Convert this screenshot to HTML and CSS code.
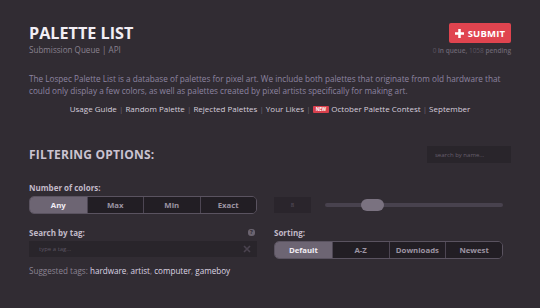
FILE: index.html
```html
<!DOCTYPE html>
<html lang="en">
<head>
  <meta charset="UTF-8">
  <title>Palette List</title>
  <link rel="stylesheet" href="styles.css">
</head>
<body>
  <div class="page">
    <!-- header -->
    <div class="header">
      <div class="title-block">
        <h1 class="title">PALETTE LIST</h1>
        <div class="subnav"><a>Submission Queue</a> | <a>API</a></div>
      </div>
      <div class="submit-block">
        <button class="submit-btn">
          <svg width="9" height="9" viewBox="0 0 10 10"><path d="M3.6 0h2.8v3.6H10v2.8H6.4V10H3.6V6.4H0V3.6h3.6z" fill="#fff"/></svg>
          SUBMIT
        </button>
        <div class="queue"><b>0</b> in queue, <b>1058</b> pending</div>
      </div>
    </div>

    <p class="desc">The Lospec Palette List is a database of palettes for pixel art. We include both palettes that originate from old hardware that could only display a few colors, as well as palettes created by pixel artists specifically for making art.</p>

    <div class="links">
      <a>Usage Guide</a> <span class="sep">|</span>
      <a>Random Palette</a> <span class="sep">|</span>
      <a>Rejected Palettes</a> <span class="sep">|</span>
      <a>Your Likes</a> <span class="sep">|</span>
      <span class="new">NEW</span> <a>October Palette Contest</a> <span class="sep">|</span>
      <a>September</a>
    </div>

    <!-- filters -->
    <div class="filter-head">
      <h2>FILTERING OPTIONS:</h2>
      <input class="name-search" type="text" placeholder="search by name...">
    </div>

    <div class="filters">
      <div class="field">
        <div class="label">Number of colors:</div>
        <div class="seg">
          <span class="active">Any</span>
          <span>Max</span>
          <span>Min</span>
          <span>Exact</span>
        </div>
      </div>
      <div class="field range-field">
        <div class="count-box">8</div>
        <div class="slider"><div class="thumb"></div></div>
      </div>

      <div class="field">
        <div class="label">Search by tag: <span class="help">?</span></div>
        <div class="tag-input">
          <span>type a tag...</span>
          <svg width="8" height="8" viewBox="0 0 8 8"><path d="M1 1l6 6M7 1L1 7" stroke="#4a434f" stroke-width="1.6"/></svg>
        </div>
        <div class="suggested">Suggested tags: <a>hardware</a>, <a>artist</a>, <a>computer</a>, <a>gameboy</a></div>
      </div>
      <div class="field">
        <div class="label">Sorting:</div>
        <div class="seg">
          <span class="active">Default</span>
          <span>A-Z</span>
          <span>Downloads</span>
          <span>Newest</span>
        </div>
      </div>
    </div>
  </div>
</body>
</html>
```

FILE: styles.css
```css
html, body {
  margin: 0;
  height: 100%;
}
body {
  background: #312c33;
  font-family: 'Open Sans', 'DejaVu Sans', sans-serif;
  color: #d8d0de;
  overflow: hidden;
}
.page {
  width: 482px;
  margin: 0 auto;
  padding-top: 23px;
}
.header {
  display: flex;
  justify-content: space-between;
  align-items: flex-start;
}
.title {
  margin: 0;
  font-size: 16.2px;
  line-height: 20px;
  font-weight: 700;
  color: #f2eef4;
}
.subnav {
  font-size: 8.1px;
  line-height: 12px;
  color: #8a8290;
  margin-top: 1px;
}
.submit-block {
  display: flex;
  flex-direction: column;
  align-items: flex-end;
}
.submit-btn {
  display: flex;
  align-items: center;
  justify-content: center;
  gap: 4px;
  width: 62px;
  height: 20px;
  padding: 0;
  background: #e0444f;
  border: none;
  border-radius: 2px;
  color: #fff;
  font-family: inherit;
  font-size: 9.5px;
  font-weight: 700;
  letter-spacing: 0.2px;
}
.queue {
  margin-top: 3px;
  font-size: 6.5px;
  color: #6c6572;
  font-weight: 600;
}
.queue b {
  font-weight: 400;
  color: #5b5461;
}
.desc {
  margin: 17px 0 0;
  font-size: 8.2px;
  line-height: 12px;
  color: #8d84a0;
  padding-right: 10px;
}
.links {
  margin-top: 6px;
  text-align: center;
  font-size: 8px;
  line-height: 12px;
  color: #d6cedd;
}
.links .sep {
  color: #6b6371;
}
.new {
  display: inline-block;
  background: #d8404d;
  color: #fff;
  font-size: 4.5px;
  font-weight: 700;
  line-height: 7px;
  padding: 0 3px;
  border-radius: 1px;
  vertical-align: 1px;
}
.filter-head {
  margin-top: 31px;
  display: flex;
  justify-content: space-between;
  align-items: center;
}
.filter-head h2 {
  margin: 0;
  font-size: 12px;
  font-weight: 700;
  color: #cbc3d1;
  letter-spacing: 0.2px;
}
.name-search {
  width: 84px;
  height: 17px;
  box-sizing: border-box;
  border: none;
  background: #29252b;
  color: #aaa;
  font-family: inherit;
  font-size: 6px;
  padding: 0 8px;
  outline: none;
}
.name-search::placeholder {
  color: #675f6d;
}
.filters {
  display: grid;
  grid-template-columns: 228px 229px;
  column-gap: 17px;
  row-gap: 13px;
  margin-top: 19px;
}
.label {
  display: flex;
  justify-content: space-between;
  align-items: center;
  font-size: 8px;
  font-weight: 700;
  color: #c2bac8;
  line-height: 11px;
  margin-bottom: 3px;
}
.help {
  width: 7px;
  height: 7px;
  border-radius: 3px;
  background: #6b6470;
  color: #312c33;
  font-size: 6px;
  line-height: 7px;
  text-align: center;
  margin-right: 2px;
}
.seg {
  display: grid;
  grid-template-columns: repeat(4, 1fr);
  height: 18px;
  box-sizing: border-box;
  border: 1px solid #5a5360;
  border-radius: 5px;
  overflow: hidden;
}
.seg span {
  display: flex;
  align-items: center;
  justify-content: center;
  background: #221e24;
  color: #9c94a2;
  font-size: 7.8px;
  font-weight: 700;
  border-left: 1px solid #4d4653;
}
.seg span:first-child {
  border-left: none;
}
.seg span.active {
  background: #6d6573;
  color: #f1edf3;
}
.range-field {
  display: flex;
  align-items: center;
  padding-top: 14px;
}
.count-box {
  width: 37px;
  height: 16px;
  background: #2a252c;
  color: #5e5764;
  font-size: 6px;
  line-height: 16px;
  text-align: center;
}
.slider {
  position: relative;
  margin-left: 14px;
  width: 178px;
  height: 4px;
  border-radius: 2px;
  background: #48424e;
}
.thumb {
  position: absolute;
  left: 36px;
  top: -4px;
  width: 23px;
  height: 12px;
  border-radius: 6px;
  background: #7a7280;
}
.tag-input {
  display: flex;
  justify-content: space-between;
  align-items: center;
  height: 16px;
  background: #29252b;
  padding: 0 6px 0 10px;
  font-size: 6px;
  color: #5d5663;
}
.suggested {
  margin-top: 8px;
  font-size: 8.1px;
  color: #8b8392;
}
.suggested a {
  color: #ddd5e3;
}
```
